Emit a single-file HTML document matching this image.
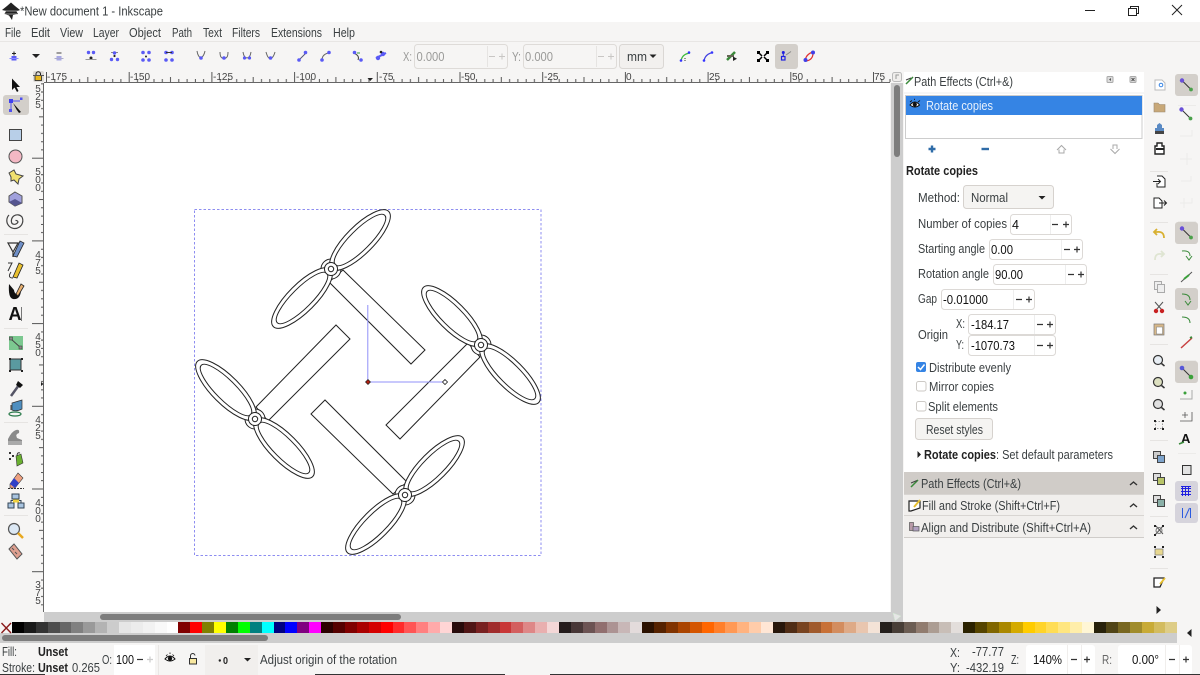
<!DOCTYPE html>
<html lang="en">
<head>
<meta charset="utf-8">
<title>New document 1 - Inkscape</title>
<style>
html,body{margin:0;padding:0;width:1200px;height:675px;overflow:hidden;background:#f6f5f4}
svg{display:block;position:absolute;left:0;top:0}
text{font-family:"Liberation Sans",sans-serif;font-size:12.5px;fill:#3a3f41}
.k{fill:#111}
.b{font-weight:bold;fill:#222}
.g{fill:#9a9a98}
.r{font-size:10px;fill:#444}
.ib{fill:#fff;stroke:#dcd9d6}
.pm{stroke:#333;stroke-width:1.2;fill:none}
.n{fill:#5a5af5}
.l{fill:none;stroke:#666;stroke-width:1}
.act{fill:#d3cfca}
#pal{position:absolute;left:12px;top:622px;height:11px;display:flex;width:1165px}
#pal i{display:block;flex:1 1 0;height:11px}
</style>
</head>
<body>
<svg width="1200" height="675" viewBox="0 0 1200 675" xmlns="http://www.w3.org/2000/svg">
<defs>
<pattern id="hr" patternUnits="userSpaceOnUse" x="46" y="70" width="82.7" height="13">
<path d="M.5 2V12M8.8 9V12M17 9V12M25.3 9V12M33.6 9V12M41.8 7V12M50.1 9V12M58.4 9V12M66.7 9V12M74.9 9V12" stroke="#555" fill="none"/>
</pattern>
<pattern id="vr" patternUnits="userSpaceOnUse" x="31" y="75" width="13" height="82.7">
<path d="M1 .5H13M10 8.8H13M10 17H13M10 25.3H13M10 33.6H13M8 41.8H13M10 50.1H13M10 58.4H13M10 66.7H13M10 74.9H13" stroke="#555" fill="none"/>
</pattern>
<g id="u" fill="#fff" stroke="#222" stroke-width="1">
<polygon points="343,270 425,350 411,364 329,282"/>
<circle cx="331" cy="269" r="10"/>
<ellipse cx="360" cy="240" rx="40.500" ry="14" transform="rotate(-45 360 240)"/>
<ellipse cx="360" cy="240" rx="35" ry="10" transform="rotate(-45 360 240)"/>
<ellipse cx="302" cy="298" rx="40.500" ry="14" transform="rotate(-45 302 298)"/>
<ellipse cx="302" cy="298" rx="35" ry="10" transform="rotate(-45 302 298)"/>
<circle cx="331" cy="269" r="6.500"/>
<circle cx="331" cy="269" r="2.700"/>
</g>
<g id="snapn"><path d="M-4.500-4.500L4.500 4.500" stroke="#333" stroke-width="1"/><circle cx="-4.500" cy="-4.500" r="2.200" fill="#6a50d8"/><circle cx="4.500" cy="4.500" r="1.900" fill="#4aa04a"/></g>
<g id="arr"><path d="M-4-2H4L0 2Z" fill="#222"/></g>
</defs>

<!-- title bar -->
<rect width="1200" height="22" fill="#fff"/>
<path d="M11 2.500L15 6L20 10L16.500 11.500L18 14L13 15L12 20L9 15.500L4.500 14L6 11L2 10L7 6Z" fill="#222"/>
<path d="M3 11H19M5 14H17" stroke="#fff" stroke-width=".5"/>
<text x="20" y="15.500" style="font-size:13px" textLength="143" lengthAdjust="spacingAndGlyphs">*New document 1 - Inkscape</text>
<path d="M1085 10.500H1095" stroke="#222"/>
<path d="M1128.500 8.500H1136.500V15.500H1128.500ZM1130.500 8V6.500H1138.500V13.500H1137" fill="none" stroke="#222"/>
<path d="M1172 5L1182 15M1182 5L1172 15" stroke="#222"/>

<!-- menu -->
<text x="5" y="37" textLength="16" lengthAdjust="spacingAndGlyphs">File</text>
<text x="31" y="37" textLength="19" lengthAdjust="spacingAndGlyphs">Edit</text>
<text x="60" y="37" textLength="23" lengthAdjust="spacingAndGlyphs">View</text>
<text x="93" y="37" textLength="26" lengthAdjust="spacingAndGlyphs">Layer</text>
<text x="129" y="37" textLength="32" lengthAdjust="spacingAndGlyphs">Object</text>
<text x="172" y="37" textLength="20" lengthAdjust="spacingAndGlyphs">Path</text>
<text x="203" y="37" textLength="19" lengthAdjust="spacingAndGlyphs">Text</text>
<text x="232" y="37" textLength="28" lengthAdjust="spacingAndGlyphs">Filters</text>
<text x="271" y="37" textLength="51" lengthAdjust="spacingAndGlyphs">Extensions</text>
<text x="333" y="37" textLength="22" lengthAdjust="spacingAndGlyphs">Help</text>
<path d="M0 41.500H1200" stroke="#e8e6e4"/>

<!-- top toolbar icons -->
<g>
<path d="M14 51.500V55.500M12 53.500H16" stroke="#222"/><rect x="11.500" y="56" width="5" height="4.500" class="n"/><path d="M9.500 58.500H18.500" stroke="#88f"/>
<use href="#arr" x="36" y="56"/>
<path d="M56.500 53H61.500" stroke="#444"/><rect x="56.500" y="56" width="5" height="4.500" fill="#a8a8e4"/><path d="M54.500 58.500H63.500" stroke="#aac"/>
<circle cx="88.500" cy="52.500" r="1.700" class="n"/><circle cx="93.500" cy="52.500" r="1.700" class="n"/><circle cx="91" cy="58" r="1.500" fill="#222"/><path d="M85.500 59.500H96.500" stroke="#999"/>
<path d="M111 52.500H118" stroke="#888"/><circle cx="114.500" cy="53" r="1.700" class="n"/><circle cx="111.500" cy="59.500" r="1.700" class="n"/><circle cx="117.500" cy="59.500" r="1.700" class="n"/><circle cx="114.500" cy="56" r="1.100" fill="#222"/>
<circle cx="143" cy="52.500" r="1.800" class="n"/><circle cx="149" cy="52.500" r="1.800" class="n"/><circle cx="143" cy="60" r="1.800" class="n"/><circle cx="149" cy="60" r="1.800" class="n"/><circle cx="146" cy="56.500" r="1" fill="#222"/>
<circle cx="166" cy="52.500" r="1.800" class="n"/><circle cx="172" cy="52.500" r="1.800" class="n"/><circle cx="166" cy="60" r="1.800" class="n"/><circle cx="172" cy="60" r="1.800" class="n"/><path d="M166 52.500H172" stroke="#333"/>
<path d="M197 51Q198 57 201 58Q204 56 205 51" class="l"/><circle cx="201" cy="58" r="1.800" class="n"/>
<path d="M220 52Q220 59 224 58Q228 59 228 52" class="l"/><circle cx="224" cy="58" r="1.800" class="n"/>
<path d="M243 52Q244 58 247 58Q250 58 251 52" class="l"/><circle cx="244.500" cy="58" r="1.600" class="n"/><circle cx="249.500" cy="58" r="1.600" class="n"/>
<path d="M266 52Q268 59 270 58Q273 59 275 52" class="l"/><circle cx="270.500" cy="58" r="1.800" class="n"/>
<path d="M299 60L306 53" stroke="#557"/><circle cx="299" cy="60" r="1.800" class="n"/><circle cx="305.500" cy="52.500" r="1.800" class="n"/>
<path d="M322 60Q322 54 330 52.500" class="l"/><circle cx="322" cy="60" r="1.800" class="n"/><circle cx="329" cy="52.500" r="1.800" class="n"/>
<path d="M354 53Q360 56 358 60" stroke="#444" fill="none"/><circle cx="354.500" cy="52.500" r="1.800" class="n"/><circle cx="361" cy="60" r="1.800" class="n"/><path d="M357 53h3" stroke="#393"/>
<path d="M376 58L386 53" stroke="#5a5af5" stroke-width="2"/><circle cx="378" cy="58" r="2.200" class="n"/><circle cx="383" cy="54" r="2.200" class="n"/><circle cx="381" cy="52" r="1.300" fill="#222"/>
</g>
<text x="403" y="61" class="g" textLength="9" lengthAdjust="spacingAndGlyphs">X:</text>
<rect x="414.500" y="44.500" width="93" height="24" rx="3" fill="#f6f5f4" stroke="#dedbd8"/>
<text x="416.500" y="61" class="g" textLength="28" lengthAdjust="spacingAndGlyphs">0.000</text>
<path d="M487.500 46V67" stroke="#e6e4e2"/><path d="M489 56.500H495M499 56.500H505M502 53.500V59.500" stroke="#c8c6c4"/>
<text x="512" y="61" class="g" textLength="9" lengthAdjust="spacingAndGlyphs">Y:</text>
<rect x="523.500" y="44.500" width="93" height="24" rx="3" fill="#f6f5f4" stroke="#dedbd8"/>
<text x="525" y="61" class="g" textLength="28" lengthAdjust="spacingAndGlyphs">0.000</text>
<path d="M596.500 46V67" stroke="#e6e4e2"/><path d="M598 56.500H604M608 56.500H614M611 53.500V59.500" stroke="#c8c6c4"/>
<rect x="619.500" y="44.500" width="44" height="24" rx="3" fill="#f2f0ee" stroke="#dad7d4"/>
<text x="627" y="61" textLength="20" lengthAdjust="spacingAndGlyphs">mm</text>
<path d="M649.500 54.500H656.500L653 58Z" fill="#222"/>
<g>
<path d="M681 61Q682 54 690 53" fill="none" stroke="#3cba3c" stroke-width="1.200"/><circle cx="681" cy="60.500" r="1.300" fill="#33f"/><circle cx="689" cy="52.500" r="1.300" fill="#33f"/><path d="M685 61V57" stroke="#333" stroke-dasharray="1 1"/>
<path d="M704 61Q705 54 713 52.500" fill="none" stroke="#4040e0" stroke-width="1.200"/><circle cx="704" cy="60.500" r="1.300" fill="#33f"/><circle cx="712" cy="52.500" r="1.300" fill="#33f"/>
<path d="M727 60L735 52" stroke="#3a8a3a" stroke-width="2.500"/><path d="M727 56H734" stroke="#665" stroke-width="2"/><path d="M733 56.500V61L737 58.700Z" fill="#222"/>
<path d="M758 52L762 56M768 52L764 56M758 61L762 57M768 61L764 57" stroke="#000" stroke-width="1.500"/><path d="M757 51h3v3h-3zM766 51h3v3h-3zM757 59h3v3h-3zM766 59h3v3h-3z" fill="#000"/>
<rect x="775" y="44" width="23" height="25" rx="3" class="act"/>
<rect x="781.500" y="56.500" width="3.500" height="3.500" fill="none" stroke="#2020e0" stroke-width="1.200"/><path d="M783.300 56V53" stroke="#2020e0"/><circle cx="783.300" cy="52.500" r="1.500" fill="#2020e0"/><path d="M786 55L791 51.500" stroke="#888"/>
<path d="M805 61Q806 54 813 52" fill="none" stroke="#e03030" stroke-width="1.200"/><path d="M806 61Q813 60 813 53" fill="none" stroke="#e03030" stroke-width="1.200"/><circle cx="805.500" cy="60" r="2" fill="#4040e8"/><circle cx="813" cy="52.500" r="2" fill="#4040e8"/>
</g>

<!-- rulers -->
<rect x="31" y="70" width="859" height="13" fill="#f6f5f4"/>
<rect x="46" y="70" width="845" height="13" fill="url(#hr)"/>
<path d="M44 82.500H890" stroke="#666"/>
<rect x="33" y="71" width="11" height="11" rx="2" fill="#dedbd7"/>
<path d="M36 75.500V74A2 2 0 0 1 40.500 74V75.500" fill="none" stroke="#222"/><rect x="35" y="75.500" width="6.500" height="5" fill="#e8b820" stroke="#222" stroke-width=".8"/>
<g>
<text class="r" x="47" y="80">-175</text><text class="r" x="130" y="80">-150</text><text class="r" x="213" y="80">-125</text><text class="r" x="296" y="80">-100</text><text class="r" x="379" y="80">-75</text><text class="r" x="461" y="80">-50</text><text class="r" x="544" y="80">-25</text><text class="r" x="626" y="80">0</text><text class="r" x="709" y="80">25</text><text class="r" x="792" y="80">50</text><text class="r" x="874" y="80">75</text>
</g>
<path d="M367.500 78H373L370.200 81Z" fill="#222"/>
<rect x="31" y="83" width="13" height="529" fill="#f6f5f4"/>
<rect x="31" y="75" width="13" height="537" fill="url(#vr)"/>
<rect x="31" y="71" width="2" height="10" fill="#f6f5f4"/>
<path d="M43.500 83V612" stroke="#666"/>
<g>
<text class="r" x="38" y="92" text-anchor="middle">5</text><text class="r" x="38" y="100" text-anchor="middle">2</text><text class="r" x="38" y="108" text-anchor="middle">5</text>
<text class="r" x="38" y="175" text-anchor="middle">5</text><text class="r" x="38" y="183" text-anchor="middle">0</text><text class="r" x="38" y="191" text-anchor="middle">0</text>
<text class="r" x="38" y="258" text-anchor="middle">4</text><text class="r" x="38" y="266" text-anchor="middle">7</text><text class="r" x="38" y="274" text-anchor="middle">5</text>
<text class="r" x="38" y="340" text-anchor="middle">4</text><text class="r" x="38" y="348" text-anchor="middle">5</text><text class="r" x="38" y="356" text-anchor="middle">0</text>
<text class="r" x="38" y="423" text-anchor="middle">4</text><text class="r" x="38" y="431" text-anchor="middle">2</text><text class="r" x="38" y="439" text-anchor="middle">5</text>
<text class="r" x="38" y="506" text-anchor="middle">4</text><text class="r" x="38" y="514" text-anchor="middle">0</text><text class="r" x="38" y="522" text-anchor="middle">0</text>
<text class="r" x="38" y="588" text-anchor="middle">3</text><text class="r" x="38" y="596" text-anchor="middle">7</text><text class="r" x="38" y="604" text-anchor="middle">5</text>
</g>
<path d="M41 382V386L43.500 384Z" fill="#222"/>

<!-- canvas -->
<rect x="44" y="83" width="846" height="529" fill="#fff"/>
<rect x="194.500" y="209.500" width="346.500" height="346" fill="none" stroke="#8d8df0" stroke-dasharray="2.500 2"/>
<use href="#u"/>
<use href="#u" transform="rotate(90 368 382)"/>
<use href="#u" transform="rotate(180 368 382)"/>
<use href="#u" transform="rotate(270 368 382)"/>
<path d="M367.800 305V382H445" fill="none" stroke="#9090f8"/>
<path d="M368 379.500L370.500 382L368 384.500L365.500 382Z" fill="#b02010" stroke="#222" stroke-width=".7"/>
<path d="M445 379.500L447.500 382L445 384.500L442.500 382Z" fill="#fff" stroke="#222" stroke-width=".8"/>

<!-- scrollbars -->
<rect x="891" y="83" width="12" height="539" fill="#cdcdcd"/>
<rect x="44" y="612" width="859" height="10" fill="#cdcdcd"/>
<rect x="894" y="85" width="6" height="72" rx="3" fill="#7d7d7d"/>
<rect x="100" y="614" width="301" height="6" rx="3" fill="#7d7d7d"/>
<rect x="892.500" y="72.500" width="9" height="9" rx="2" fill="#f0eeec" stroke="#bbb"/>
<path d="M896 79V75H899" stroke="#999" fill="none"/>
<path d="M893 613L901 616L895 621Z" fill="#e6e6e6" stroke="#cfe6cf" stroke-width=".5"/>
<rect x="0" y="633" width="1177" height="10" fill="#cdcdcd"/>
<rect x="2" y="635" width="266" height="6" rx="3" fill="#7d7d7d"/>
<path d="M1.500 623L11 633M11 623L1.500 633" stroke="#8a1a1a" stroke-width="1.400"/>
<path d="M1191.500 629V637L1187 633Z" fill="#222"/>

<!-- left toolbar -->
<g>
<path d="M12 78.500V90L14.500 87.500L17 92L18.500 91L16.500 87H20Z" fill="#111"/>
<rect x="3" y="95" width="26" height="20" rx="3" class="act"/>
<path d="M11 101H20M11 101V110" stroke="#5050f0" fill="none"/><rect x="9" y="99" width="4" height="4" fill="#4040f0"/><rect x="20" y="97.500" width="2.500" height="2.500" fill="#5050f0"/><rect x="9" y="109" width="3" height="3" fill="#5050f0"/>
<path d="M13 103L21 112L19 113L16.500 109.500Z" fill="#111"/>
<rect x="9.500" y="129.500" width="12" height="11" fill="#b8cfe8" stroke="#444"/>
<circle cx="15.500" cy="156.500" r="6.500" fill="#f4b8c4" stroke="#555"/>
<path d="M9 173L14 170L16 174L23 176L19 179L18 184L14 180L11 181L11 177Z" fill="#f0e070" stroke="#444"/>
<path d="M15 192L22 196V203L15 206L9 202V196Z" fill="#a0a0dc" stroke="#555"/><path d="M15 199L22 203L15 206L9 202Z" fill="#555590"/>
<path d="M15.500 220.500A2 2 0 0 1 18 222A4 4 0 0 1 12 223.500A6 6 0 0 1 22 217A8 8 0 1 1 9 215" fill="none" stroke="#444" stroke-width="1.200"/>
<path d="M8 243H18L13 252ZM13 252V257" fill="none" stroke="#333" stroke-width="1.200"/><path d="M13 256L20 241L24 243L17 257Z" fill="#7090c8" stroke="#222" stroke-width=".8"/>
<path d="M8 263H12L8 271M13 278Q7 278 11 272" fill="none" stroke="#333"/><path d="M13 277L19 263L23 265L17 278Z" fill="#e8c030" stroke="#222" stroke-width=".8"/>
<path d="M9 284Q8 298 13 299Q20 300 21 291Q15 297 14 290Z" fill="#111"/><path d="M16 294L21 284L24 286L18 296Z" fill="#e8b070" stroke="#222" stroke-width=".8"/>
<text x="8.500" y="320" class="k" style="font-size:18px;font-weight:bold">A</text><path d="M21.500 307V321" stroke="#777"/>
<rect x="9" y="336" width="14" height="14" fill="#7cc890"/><path d="M11 339L21 348" stroke="#444"/><rect x="9.500" y="337" width="3" height="3" fill="#888" stroke="#333" stroke-width=".5"/><rect x="19" y="346" width="3" height="3" fill="#888" stroke="#333" stroke-width=".5"/>
<rect x="10" y="359" width="11" height="11" fill="#5a9aa0" stroke="#333"/><path d="M9 358h2v2H9zM21 358h2v2h-2zM9 370h2v2H9zM21 370h2v2h-2z" fill="#222"/>
<path d="M11 396L19 385" stroke="#556" stroke-width="2.500"/><path d="M18 381L23 385L20 388L16 385Z" fill="#111"/>
<path d="M12 403L22 400V409Q16 412 12 410Z" fill="#4f8fc0" stroke="#333" stroke-width=".7"/><ellipse cx="15" cy="414" rx="6" ry="2" fill="none" stroke="#2a7a4a" stroke-width="1.200"/><path d="M11 405V410" stroke="#333"/>
<path d="M8 444V439Q12 431 16 430Q20 429 19 433Q15 434 17 438L22 440V445Z" fill="#8a8a8a"/><rect x="8" y="441" width="14" height="4" fill="#aaa"/>
<path d="M9 452h2v2H9zM12 455h2v2h-2zM9 458h2v2H9z" fill="#333"/><path d="M16 456L21 454L23 463L17 466Z" fill="#6ab030" stroke="#333" stroke-width=".6"/><path d="M17 456Q17 452 20 453" fill="none" stroke="#333"/>
<path d="M10 484L18 473L23 478L15 488H10Z" fill="#eea080" stroke="#333" stroke-width=".6"/><path d="M10 484L14 478L19 483L15 488Z" fill="#3040c8"/><path d="M8 488.500H24" stroke="#333" stroke-dasharray="2 1"/>
<rect x="12" y="494" width="7" height="5" fill="#a8c4e0" stroke="#345"/><rect x="8" y="503" width="6" height="5" fill="#a8c4e0" stroke="#345"/><rect x="18" y="503" width="6" height="5" fill="#a8c4e0" stroke="#345"/><rect x="13" y="499.500" width="6" height="3" fill="#eed040"/><path d="M11 503V500.500H13M19 500.500H21V503" fill="none" stroke="#345"/>
<circle cx="14" cy="529" r="5.500" fill="#dce8f4" stroke="#555" stroke-width="1.200"/><path d="M18 533L23 538" stroke="#e8a820" stroke-width="2.500"/>
<path d="M9 549L14 544L22 554L17 559Z" fill="#dfa090" stroke="#555"/><path d="M12 548L14 550M15 552L17 554" stroke="#555"/>
<path d="M4 234.500H28M4 328.500H28M4 422.500H28M4 515.500H28" stroke="#e6e4e2"/>
</g>

<!-- panel -->
<rect x="904" y="72" width="240" height="400" fill="#fff"/>
<path d="M906 84L913 77" stroke="#3a8a3a" stroke-width="1.500"/><path d="M906 80L911 78" stroke="#444"/>
<text x="914" y="86" textLength="99" lengthAdjust="spacingAndGlyphs">Path Effects (Ctrl+&amp;)</text>
<rect x="1107" y="76.500" width="6" height="6" rx="1" fill="#ddd" stroke="#aaa"/><path d="M1111 78V81L1109 79.500Z" fill="#555"/>
<rect x="1130" y="76.500" width="6" height="6" rx="1" fill="#ddd" stroke="#aaa"/><path d="M1131.500 78L1134.500 81M1134.500 78L1131.500 81" stroke="#555"/>
<path d="M904 93H1144" stroke="#eee"/>
<rect x="905.500" y="95.500" width="236.500" height="43" fill="#fff" stroke="#cdcdcd"/>
<rect x="906" y="96" width="236" height="19" fill="#3584e4"/>
<path d="M910 105Q915 99 919.500 105Q915 109 910 105Z" fill="#fff" stroke="#111"/><circle cx="914.800" cy="104.500" r="2.100" fill="#111"/><path d="M910 102L912 100.500M914.500 100V98.800M918 102L920 100.500" stroke="#111" stroke-width=".8"/>
<text x="926" y="110" style="fill:#e8f1fc" textLength="67" lengthAdjust="spacingAndGlyphs">Rotate copies</text>
<path d="M928.500 149H935.500M932 145.500V152.500" stroke="#2f6ca8" stroke-width="2.400"/>
<path d="M981.500 149H989" stroke="#2f6ca8" stroke-width="2.400"/>
<path d="M1057 150L1061.500 145.500L1066 150M1059 149.500V153H1064V149.500" fill="none" stroke="#a8a8a8"/>
<path d="M1110.500 149L1115 153.500L1119.500 149M1113 149V145H1117V149" fill="none" stroke="#a8a8a8"/>
<text x="906" y="175" class="b" textLength="72" lengthAdjust="spacingAndGlyphs">Rotate copies</text>

<text x="918" y="202" textLength="42" lengthAdjust="spacingAndGlyphs">Method:</text>
<rect x="963.500" y="185.500" width="90" height="23" rx="3" fill="#f5f4f2" stroke="#d6d2ce"/>
<text x="971" y="202" textLength="37" lengthAdjust="spacingAndGlyphs">Normal</text>
<path d="M1038.500 196H1045.500L1042 199.500Z" fill="#222"/>

<text x="918" y="228" textLength="89" lengthAdjust="spacingAndGlyphs">Number of copies</text>
<rect x="1010.500" y="214.500" width="61" height="20" rx="3" class="ib"/>
<text x="1012" y="229" class="k">4</text>
<path d="M1050.500 215V234" stroke="#eee"/><path d="M1052 224.500H1058M1063 224.500H1069M1066 221.500V227.500" class="pm"/>

<text x="918" y="253" textLength="67" lengthAdjust="spacingAndGlyphs">Starting angle</text>
<rect x="989.500" y="239.500" width="93" height="20" rx="3" class="ib"/>
<text x="991" y="254" class="k" textLength="22" lengthAdjust="spacingAndGlyphs">0.00</text>
<path d="M1061.500 240V259" stroke="#eee"/><path d="M1064 249.500H1070M1074 249.500H1080M1077 246.500V252.500" class="pm"/>

<text x="918" y="278" textLength="71" lengthAdjust="spacingAndGlyphs">Rotation angle</text>
<rect x="993.500" y="264.500" width="93" height="20" rx="3" class="ib"/>
<text x="995" y="279" class="k" textLength="28" lengthAdjust="spacingAndGlyphs">90.00</text>
<path d="M1065.500 265V284" stroke="#eee"/><path d="M1068 274.500H1074M1078 274.500H1084M1081 271.500V277.500" class="pm"/>

<text x="918" y="303" textLength="19" lengthAdjust="spacingAndGlyphs">Gap</text>
<rect x="941.500" y="289.500" width="93" height="20" rx="3" class="ib"/>
<text x="943" y="304" class="k" textLength="45" lengthAdjust="spacingAndGlyphs">-0.01000</text>
<path d="M1013.500 290V309" stroke="#eee"/><path d="M1016 299.500H1022M1026 299.500H1032M1029 296.500V302.500" class="pm"/>

<text x="918" y="339" textLength="30" lengthAdjust="spacingAndGlyphs">Origin</text>
<text x="956" y="328" textLength="9" lengthAdjust="spacingAndGlyphs">X:</text>
<rect x="968.500" y="314.500" width="87" height="20" rx="3" class="ib"/>
<text x="971" y="329" class="k" textLength="38" lengthAdjust="spacingAndGlyphs">-184.17</text>
<path d="M1034.500 315V334" stroke="#eee"/><path d="M1037 324.500H1043M1047 324.500H1053M1050 321.500V327.500" class="pm"/>
<text x="956" y="349" textLength="8" lengthAdjust="spacingAndGlyphs">Y:</text>
<rect x="968.500" y="335.500" width="87" height="20" rx="3" class="ib"/>
<text x="971" y="350" class="k" textLength="44" lengthAdjust="spacingAndGlyphs">-1070.73</text>
<path d="M1034.500 336V355" stroke="#eee"/><path d="M1037 345.500H1043M1047 345.500H1053M1050 342.500V348.500" class="pm"/>

<rect x="916" y="362" width="10" height="10" rx="2" fill="#3584e4"/><path d="M918 367L920.500 369.500L924.500 364.500" fill="none" stroke="#fff" stroke-width="1.500"/>
<text x="929" y="372" textLength="82" lengthAdjust="spacingAndGlyphs">Distribute evenly</text>
<rect x="916.500" y="381.500" width="9.500" height="9.500" rx="2" fill="#fff" stroke="#cdcac6"/>
<text x="929" y="391" textLength="65" lengthAdjust="spacingAndGlyphs">Mirror copies</text>
<rect x="916.500" y="401.500" width="9.500" height="9.500" rx="2" fill="#fff" stroke="#cdcac6"/>
<text x="928" y="411" textLength="70" lengthAdjust="spacingAndGlyphs">Split elements</text>
<rect x="915.500" y="418.500" width="77" height="21" rx="3" fill="#f5f4f2" stroke="#d6d2ce"/>
<text x="926" y="434" textLength="57" lengthAdjust="spacingAndGlyphs">Reset styles</text>
<path d="M917.500 451V458L921 454.500Z" fill="#222"/>
<text x="924" y="459" class="b" textLength="72" lengthAdjust="spacingAndGlyphs">Rotate copies</text>
<text x="996" y="459" textLength="117" lengthAdjust="spacingAndGlyphs">: Set default parameters</text>

<rect x="904" y="472" width="240" height="22" fill="#d0ccc8"/>
<rect x="904" y="494" width="240" height="22" fill="#f1efed"/>
<rect x="904" y="516" width="240" height="21" fill="#f1efed"/>
<path d="M904 494.500H1144M904 515.500H1144" stroke="#d8d5d2"/><path d="M904 537.500H1144" stroke="#cfccc9"/>
<path d="M911 487L918 480" stroke="#3a8a3a" stroke-width="1.500"/><path d="M911 483L917 480.500" stroke="#444"/>
<text x="921" y="488" textLength="100" lengthAdjust="spacingAndGlyphs">Path Effects (Ctrl+&amp;)</text>
<path d="M1130 485L1133.500 482L1137 485" class="pm" style="stroke-width:1.400"/>
<path d="M909 501H920V508L911 511H909Z" fill="#fff" stroke="#222" stroke-width="1.200"/><path d="M914 507L920 500" stroke="#e8c030" stroke-width="2"/>
<text x="922" y="510" textLength="138" lengthAdjust="spacingAndGlyphs">Fill and Stroke (Shift+Ctrl+F)</text>
<path d="M1130 507L1133.500 504L1137 507" class="pm" style="stroke-width:1.400"/>
<rect x="909.500" y="522.500" width="4" height="8" fill="#b89aa8" stroke="#555" stroke-width=".7"/><rect x="913" y="526.500" width="6" height="4.500" fill="#b0a0c0" stroke="#555" stroke-width=".7"/>
<text x="921" y="532" textLength="170" lengthAdjust="spacingAndGlyphs">Align and Distribute (Shift+Ctrl+A)</text>
<path d="M1130 529L1133.500 526L1137 529" class="pm" style="stroke-width:1.400"/>

<!-- commands bar -->
<g>
<path d="M1155 80H1162L1165 83V90H1155Z" fill="#fff" stroke="#bbb"/><circle cx="1161" cy="85" r="1.800" fill="none" stroke="#3584e4"/>
<path d="M1154 103H1158L1159.500 104.500H1165V112H1154Z" fill="#c8a878" stroke="#9a8870" stroke-width=".6"/>
<path d="M1155 133V128H1157V125L1159.500 123L1162 125V128H1164V133Z" fill="#5a8ac4"/><rect x="1155" y="131" width="9" height="3" fill="#444"/>
<path d="M1155 146H1157V143H1162V146H1164V154H1155Z" fill="#fff" stroke="#222" stroke-width="1.400"/><rect x="1156" y="148" width="8" height="2" fill="#222"/>
<path d="M1157 176H1162L1165 179V187H1157V183" fill="#fff" stroke="#222"/><path d="M1153 181.500H1160M1158 179L1160.500 181.500L1158 184" fill="none" stroke="#222"/>
<path d="M1154 198H1159L1162 201V208H1154Z" fill="#fff" stroke="#222"/><path d="M1159 203H1166M1164 200.500L1166.500 203L1164 205.500" fill="none" stroke="#222"/>
<path d="M1164 238Q1164 231 1157 232H1154M1157 229L1154 232L1157 235" fill="none" stroke="#d8b030" stroke-width="1.800"/>
<path d="M1155 260Q1155 253 1161 254H1164M1161 251L1164 254L1161 257" fill="none" stroke="#dfe5d2" stroke-width="1.800"/>
<rect x="1154.500" y="281.500" width="7" height="8" fill="#eee" stroke="#aaa"/><rect x="1157.500" y="284.500" width="7" height="8" fill="#eee" stroke="#aaa"/>
<path d="M1155 302L1162 310M1163 302L1156 310" stroke="#555"/><circle cx="1156" cy="311" r="2.200" fill="#c82020"/><circle cx="1162" cy="311" r="2.200" fill="#c82020"/>
<rect x="1154" y="324" width="10" height="11" fill="#d8b888" stroke="#777" stroke-width=".7"/><rect x="1156.500" y="327" width="6" height="7" fill="#fff" stroke="#888" stroke-width=".6"/>
<circle cx="1158" cy="360" r="4.500" fill="#e8eef4" stroke="#333" stroke-width="1.200"/><path d="M1161.500 363.500L1164.500 366" stroke="#333" stroke-width="1.500"/>
<circle cx="1158" cy="382" r="4.500" fill="#dde0c0" stroke="#333" stroke-width="1.200"/><path d="M1161.500 385.500L1164.500 388" stroke="#333" stroke-width="1.500"/>
<circle cx="1158" cy="404" r="4.500" fill="#e0e0e0" stroke="#333" stroke-width="1.200"/><path d="M1161.500 407.500L1164.500 410" stroke="#333" stroke-width="1.500"/>
<rect x="1155.500" y="421.500" width="7" height="7" fill="none" stroke="#999" stroke-dasharray="1.500 1.500"/><path d="M1154 420h2v2h-2zM1162 420h2v2h-2zM1154 428h2v2h-2zM1162 428h2v2h-2z" fill="#222"/>
<rect x="1153.500" y="451.500" width="7" height="7" fill="#ccc" stroke="#444"/><rect x="1157.500" y="455.500" width="7" height="7" fill="#7ea4cc" stroke="#444"/>
<rect x="1153.500" y="473.500" width="7" height="7" fill="#ddd" stroke="#444"/><rect x="1157.500" y="477.500" width="7" height="7" fill="#b8c468" stroke="#444"/>
<rect x="1153.500" y="495.500" width="7" height="7" fill="#ddd" stroke="#444"/><rect x="1157.500" y="499.500" width="7" height="7" fill="#8ab0a8" stroke="#444"/>
<path d="M1156 526L1163 534M1155 535L1163 526" stroke="#555"/><circle cx="1159" cy="530.500" r="3" fill="none" stroke="#777"/><path d="M1154 525h2v2h-2zM1162 525h2v2h-2zM1154 534h2v2h-2z" fill="#222"/>
<rect x="1155" y="549" width="8" height="6" fill="#e8d890" stroke="#777" stroke-width=".7"/><path d="M1154 546h2v2h-2zM1162 546h2v2h-2zM1154 556h2v2h-2zM1162 556h2v2h-2z" fill="#222"/>
<path d="M1154 578H1164L1160 587H1154Z" fill="#fff" stroke="#222" stroke-width="1.300"/><path d="M1160 584L1165 578" stroke="#e8c030" stroke-width="1.800"/>
<path d="M1156.500 606V614L1161 610Z" fill="#222"/>
<path d="M1150 171.500H1168M1150 222.500H1168M1150 274.500H1168M1150 344.500H1168M1150 440.500H1168M1150 516.500H1168M1150 568.500H1168" stroke="#e6e4e2"/>
</g>

<!-- snap bar -->
<g>
<rect x="1175" y="74" width="23" height="22" rx="3" class="act"/><use href="#snapn" x="1186.500" y="85"/>
<use href="#snapn" x="1186" y="114"/>
<path d="M1180 136H1192V130M1180 159H1192M1187 153V165M1181 181H1191V176M1180 203H1192V198M1184 198V208" fill="none" stroke="#ececea"/>
<rect x="1175" y="222" width="23" height="22" rx="3" class="act"/><use href="#snapn" x="1186.500" y="233"/>
<path d="M1182 251Q1190 250 1190 256M1186 256L1189 260L1192 256" fill="none" stroke="#3a8a3a"/>
<path d="M1181 282L1192 272" stroke="#555"/><path d="M1184 279L1189 275" stroke="#3aa03a" stroke-width="2"/>
<rect x="1175" y="288" width="23" height="22" rx="3" class="act"/><path d="M1182 294Q1190 294 1190 300M1185 301L1188 305L1191 301" fill="none" stroke="#3a8a3a"/>
<path d="M1182 317Q1190 317 1190 323" fill="none" stroke="#3a8a3a"/><path d="M1181 348L1192 338" stroke="#c84040" stroke-width="1.500"/><path d="M1190 338l2-1" stroke="#3a8a3a" stroke-width="2"/>
<rect x="1175" y="361" width="23" height="22" rx="3" class="act"/><path d="M1181 367L1192 378" stroke="#333"/><circle cx="1182" cy="368" r="2.300" fill="#5858d8"/><circle cx="1191" cy="377" r="2.300" fill="#3aa03a"/>
<circle cx="1185" cy="393" r="1.500" fill="#3aa03a"/><path d="M1180 399H1192V390" fill="none" stroke="#aaa"/>
<path d="M1182 415H1188M1185 412V418M1180 421H1192V412" fill="none" stroke="#555" stroke-width=".8"/>
<text x="1181" y="443" class="b" style="font-size:13px;fill:#111">A</text><path d="M1179 444L1184 442" stroke="#3a8a3a" stroke-width="1.500"/>
<rect x="1182.500" y="465.500" width="8.500" height="9" fill="#e2e2e2" stroke="#333"/>
<rect x="1175" y="481" width="23" height="20" rx="3" fill="#d6d4dc"/>
<path d="M1181 488.500H1191M1181 491.500H1191M1181 494.500H1191M1182.500 486V496M1185.500 486V496M1188.500 486V496" stroke="#2020e0"/><path d="M1181 486.500H1191" stroke="#2020e0"/>
<rect x="1175" y="503" width="23" height="20" rx="3" fill="#d6d4dc"/>
<path d="M1182.500 508V518M1185 518L1189.500 508M1190.500 508V518" stroke="#2a5ae0" fill="none"/>
<path d="M1178 105.500H1196M1178 221.500H1196M1178 360.500H1196M1178 453.500H1196" stroke="#ecebe9"/>
</g>

<!-- status bar -->
<text x="2" y="656" textLength="15" lengthAdjust="spacingAndGlyphs">Fill:</text>
<text x="38" y="656" class="b" textLength="30" lengthAdjust="spacingAndGlyphs">Unset</text>
<text x="2" y="672" textLength="33" lengthAdjust="spacingAndGlyphs">Stroke:</text>
<text x="38" y="672" class="b" textLength="30" lengthAdjust="spacingAndGlyphs">Unset</text>
<text x="72" y="672" textLength="28" lengthAdjust="spacingAndGlyphs">0.265</text>
<text x="102" y="664" textLength="10" lengthAdjust="spacingAndGlyphs">O:</text>
<rect x="114" y="645" width="41" height="30" fill="#fff"/>
<text x="116" y="664" class="k" textLength="18" lengthAdjust="spacingAndGlyphs">100</text>
<path d="M137 659.500H143" stroke="#333" stroke-width="1.200"/><path d="M147 659.500H153M150 656.500V662.500" stroke="#ccc" stroke-width="1.200"/>
<path d="M158.500 645V675" stroke="#e9e7e5"/>
<path d="M165 659Q170 653 175 659Q170 663 165 659Z" fill="#fff" stroke="#111"/><circle cx="170" cy="658.500" r="2.200" fill="#111"/><path d="M166 656L167.500 654.500M170 654V652.500M174 656L172.500 654.500" stroke="#111" stroke-width=".8"/>
<path d="M190.500 658V656A2.200 2.200 0 0 1 195 655.500" fill="none" stroke="#333"/><rect x="189.500" y="658.500" width="7" height="5.500" fill="#f8e8a0" stroke="#333"/>
<rect x="205" y="645" width="53" height="30" fill="#f1efed"/>
<circle cx="219.800" cy="660.500" r="1.200" fill="#222"/>
<text x="223" y="664" class="b" style="font-size:10px" textLength="5" lengthAdjust="spacingAndGlyphs">0</text>
<path d="M244 658H251L247.500 661.500Z" fill="#222"/>
<text x="260" y="664" textLength="137" lengthAdjust="spacingAndGlyphs">Adjust origin of the rotation</text>

<text x="950" y="657" textLength="10" lengthAdjust="spacingAndGlyphs">X:</text>
<text x="972" y="656" textLength="32" lengthAdjust="spacingAndGlyphs">-77.77</text>
<text x="950" y="672" textLength="10" lengthAdjust="spacingAndGlyphs">Y:</text>
<text x="966" y="672" textLength="38" lengthAdjust="spacingAndGlyphs">-432.19</text>
<text x="1011" y="664" textLength="8" lengthAdjust="spacingAndGlyphs">Z:</text>
<rect x="1026" y="645" width="69" height="30" rx="3" fill="#fff"/>
<text x="1033" y="664" class="k" textLength="29" lengthAdjust="spacingAndGlyphs">140%</text>
<path d="M1067.500 645V675" stroke="#f0eeec"/><path d="M1081.500 645V675" stroke="#f0eeec"/>
<path d="M1071 659.500H1077M1084 659.500H1090M1087 656.500V662.500" class="pm"/>
<text x="1102" y="664" textLength="10" lengthAdjust="spacingAndGlyphs" class="g" style="fill:#666">R:</text>
<rect x="1118" y="645" width="74" height="30" rx="3" fill="#fff"/>
<text x="1132" y="664" class="k" textLength="27" lengthAdjust="spacingAndGlyphs">0.00°</text>
<path d="M1165.500 645V675M1179.500 645V675" stroke="#f0eeec"/>
<path d="M1169 659.500H1175M1183 659.500H1189M1186 656.500V662.500" class="pm"/>
<path d="M0 674.500H45M315 674.500H505M550 674.500H1200" stroke="#333"/>
</svg>

<div id="pal"><i style="background:#000"></i><i style="background:#1a1a1a"></i><i style="background:#333"></i><i style="background:#4d4d4d"></i><i style="background:#666"></i><i style="background:#808080"></i><i style="background:#999"></i><i style="background:#b3b3b3"></i><i style="background:#ccc"></i><i style="background:#e6e6e6"></i><i style="background:#ececec"></i><i style="background:#f2f2f2"></i><i style="background:#f9f9f9"></i><i style="background:#fff"></i><i style="background:#800000"></i><i style="background:#f00"></i><i style="background:#808000"></i><i style="background:#ff0"></i><i style="background:#008000"></i><i style="background:#0f0"></i><i style="background:#008080"></i><i style="background:#0ff"></i><i style="background:#000080"></i><i style="background:#00f"></i><i style="background:#800080"></i><i style="background:#f0f"></i><i style="background:#2b0000"></i><i style="background:#500"></i><i style="background:#800000"></i><i style="background:#a00"></i><i style="background:#d40000"></i><i style="background:#f00"></i><i style="background:#ff2a2a"></i><i style="background:#f55"></i><i style="background:#ff8080"></i><i style="background:#faa"></i><i style="background:#ffd5d5"></i><i style="background:#280b0b"></i><i style="background:#501616"></i><i style="background:#782121"></i><i style="background:#a02c2c"></i><i style="background:#c83737"></i><i style="background:#d35f5f"></i><i style="background:#de8787"></i><i style="background:#e9afaf"></i><i style="background:#f4d7d7"></i><i style="background:#241c1c"></i><i style="background:#483737"></i><i style="background:#6c5353"></i><i style="background:#916f6f"></i><i style="background:#ac9393"></i><i style="background:#c8b7b7"></i><i style="background:#e3dbdb"></i><i style="background:#2b1100"></i><i style="background:#520"></i><i style="background:#803300"></i><i style="background:#a40"></i><i style="background:#d45500"></i><i style="background:#f60"></i><i style="background:#ff7f2a"></i><i style="background:#f95"></i><i style="background:#ffb380"></i><i style="background:#fca"></i><i style="background:#ffe6d5"></i><i style="background:#28170b"></i><i style="background:#502d16"></i><i style="background:#784421"></i><i style="background:#a05a2c"></i><i style="background:#c87137"></i><i style="background:#d38d5f"></i><i style="background:#deaa87"></i><i style="background:#e9c6af"></i><i style="background:#f4e3d7"></i><i style="background:#241f1c"></i><i style="background:#483e37"></i><i style="background:#6c5d53"></i><i style="background:#917c6f"></i><i style="background:#ac9d93"></i><i style="background:#c8beb7"></i><i style="background:#e3dedb"></i><i style="background:#2b2200"></i><i style="background:#540"></i><i style="background:#806600"></i><i style="background:#a80"></i><i style="background:#d4aa00"></i><i style="background:#fc0"></i><i style="background:#ffd42a"></i><i style="background:#fd5"></i><i style="background:#ffe680"></i><i style="background:#fea"></i><i style="background:#fff6d5"></i><i style="background:#28220b"></i><i style="background:#504416"></i><i style="background:#786721"></i><i style="background:#a08c2c"></i><i style="background:#c8ab37"></i><i style="background:#d3bc5f"></i><i style="background:#decd87"></i></div>
</body>
</html>
